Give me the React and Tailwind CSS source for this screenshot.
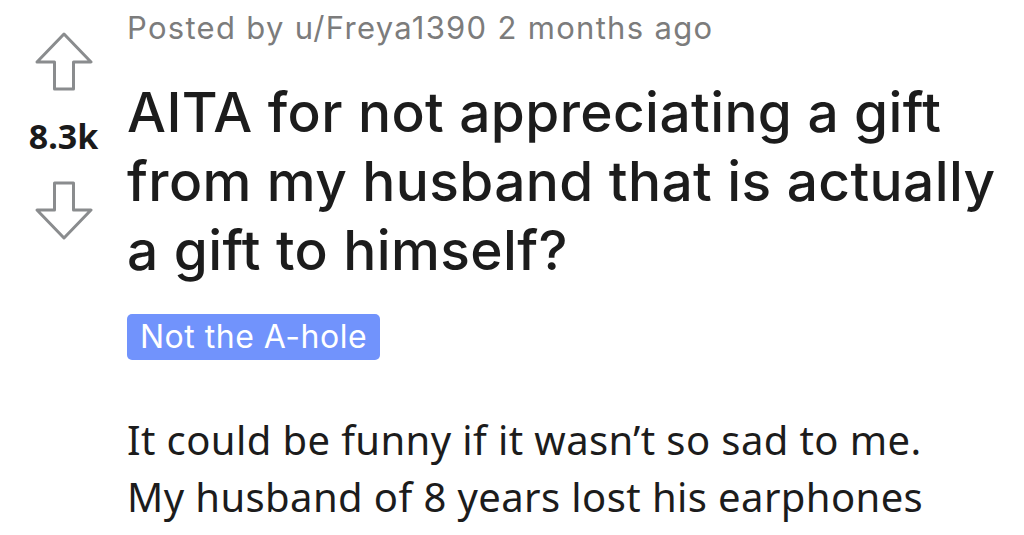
export default function App() {
  const Up = () => (
    <svg width="58" height="60" viewBox="0 0 58 60" fill="none">
      <path d="M29 2 L56 30 L38.5 30 L38.5 57 L19.5 57 L19.5 30 L2 30 Z" stroke="#8a8c8e" strokeWidth="3" strokeLinejoin="round" />
    </svg>
  );
  const Down = () => (
    <svg width="58" height="60" viewBox="0 0 58 60" fill="none">
      <path d="M29 58 L56 30 L38.5 30 L38.5 3 L19.5 3 L19.5 30 L2 30 Z" stroke="#8a8c8e" strokeWidth="3" strokeLinejoin="round" />
    </svg>
  );
  return (
    <div className="w-[1024px] h-[535px] bg-white overflow-hidden flex">
      <div className="w-[127px] shrink-0 flex flex-col items-center pt-[32px]">
        <Up />
        <div className="mt-[26px] text-[34px] leading-[36px] font-bold text-[#1a1a1b] font-['Noto_Sans',sans-serif]">8.3k</div>
        <div className="mt-[26px]"><Down /></div>
      </div>
      <div className="flex flex-col items-start pt-[8px]">
        <div className="text-[31px] leading-[40px] tracking-[1.3px] text-[#7c7c7c] font-['Inter',sans-serif]">Posted by u/Freya1390 2 months ago</div>
        <div className="mt-[30px] text-[55px] leading-[69px] tracking-[0.4px] font-medium text-[#1c1c1c] w-[900px] font-['Inter',sans-serif]">
          AITA for not appreciating a gift<br />from my husband that is actually<br />a gift to himself?
        </div>
        <div className="mt-[29px] bg-[#7193fc] text-white rounded-[5px] px-[13px] h-[46px] flex items-center text-[32px] tracking-[0.5px] font-['Inter',sans-serif]">Not the A-hole</div>
        <div className="mt-[51px] text-[40px] leading-[57px] tracking-[0.4px] text-[#1c1c1c] whitespace-nowrap font-['Noto_Sans',sans-serif]">
          It could be funny if it wasn’t so sad to me.<br />My husband of 8 years lost his earphones
        </div>
      </div>
    </div>
  );
}
